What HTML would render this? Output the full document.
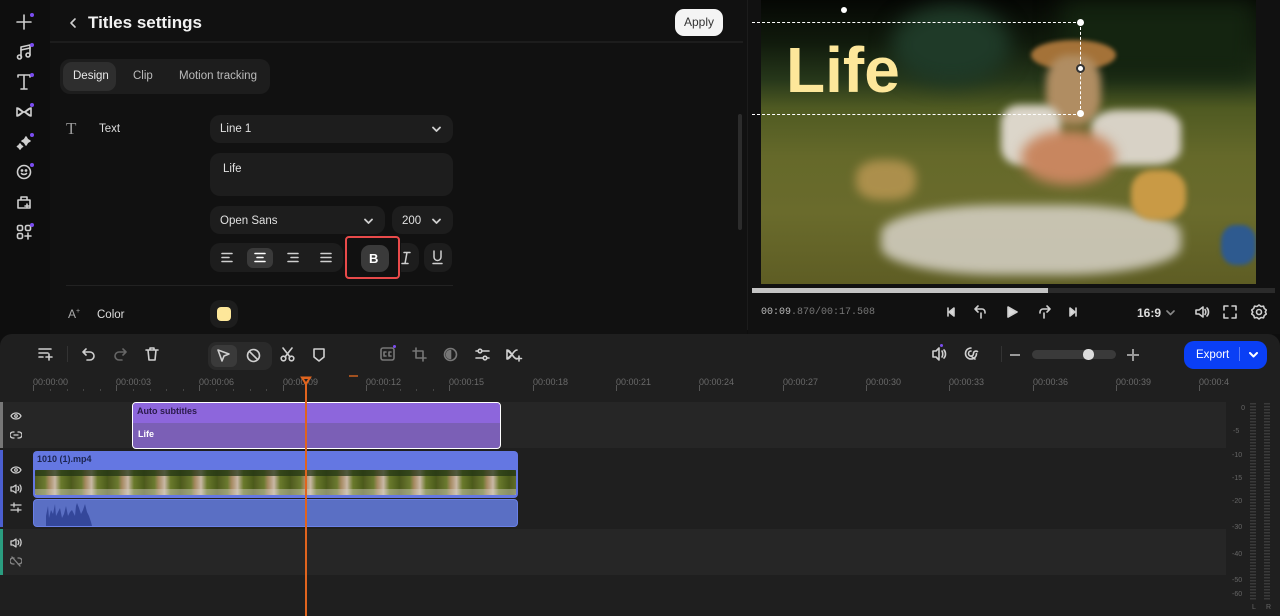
<!DOCTYPE html>
<html><head><meta charset="utf-8"><style>
*{margin:0;padding:0;box-sizing:border-box}
body{width:1280px;height:616px;overflow:hidden;background:#0e0e0e;font-family:"Liberation Sans",sans-serif;color:#ddd;position:relative}
.a{position:absolute}
.ic{position:absolute;stroke:#cfcfcf;fill:none;stroke-width:1.6;stroke-linecap:round;stroke-linejoin:round}
.dot{position:absolute;width:4px;height:4px;border-radius:2px;background:#7b4df0}
.box{position:absolute;background:#1d1d1d;border-radius:10px}
.lbl{position:absolute;font-size:9px;color:#6a6a6a;font-family:"Liberation Sans",sans-serif}
</style></head><body>
<div class="a" style="left:50px;top:0;width:697px;height:334px;background:#111"></div>
<div class="a" style="left:747px;top:0;width:1px;height:330px;background:#1c1c1c"></div>
<div class="a" style="left:748px;top:0;width:532px;height:334px;background:#111"></div>

<svg class="ic" style="left:16px;top:14px" width="16" height="16"><path d="M8 1v14M1 8h14"/></svg><div class="dot" style="left:30px;top:13px"></div>
<svg class="ic" style="left:16px;top:44px" width="16" height="16"><path d="M5 13V3l9-2v10"/><circle cx="3.5" cy="13" r="2"/><circle cx="12" cy="11" r="2"/><path d="M5 6l9-2"/></svg><div class="dot" style="left:30px;top:43px"></div>
<svg class="ic" style="left:16px;top:74px" width="16" height="16"><path d="M2 3V1h12v2M8 1v14M5 15h6"/></svg><div class="dot" style="left:30px;top:73px"></div>
<svg class="ic" style="left:16px;top:104px" width="16" height="16"><path d="M1 4v8l6-4zM15 4v8L9 8zM1 4c3 0 5 4 7 4s4-4 7-4M1 12c3 0 5-4 7-4s4 4 7 4"/></svg><div class="dot" style="left:30px;top:103px"></div>
<svg class="ic" style="left:16px;top:134px" width="16" height="16"><path d="M10 3l1.5 2.5L14 7l-2.5 1.5L10 11 8.5 8.5 6 7l2.5-1.5zM4 10l1 1.5 1.5 1-1.5 1L4 15l-1-1.5L1.5 12.5 3 11.5z" fill="#cfcfcf"/></svg><div class="dot" style="left:30px;top:133px"></div>
<svg class="ic" style="left:16px;top:164px" width="16" height="16"><circle cx="8" cy="8" r="6.5"/><circle cx="6" cy="6.5" r=".6" fill="#cfcfcf"/><circle cx="10" cy="6.5" r=".6" fill="#cfcfcf"/><path d="M5.5 9.5c1 1.3 4 1.3 5 0"/></svg><div class="dot" style="left:30px;top:163px"></div>
<svg class="ic" style="left:16px;top:194px" width="16" height="16"><path d="M2 6h12v8H2zM5 6V3h6v3M11 10v4M9 12h4"/></svg>
<svg class="ic" style="left:16px;top:224px" width="16" height="16"><rect x="1.5" y="1.5" width="5" height="5" rx="1.5"/><rect x="9.5" y="1.5" width="5" height="5" rx="1.5"/><rect x="1.5" y="9.5" width="5" height="5" rx="1.5"/><path d="M12 9v6M9 12h6"/></svg><div class="dot" style="left:30px;top:223px"></div>

<svg class="ic" style="left:69px;top:17px" width="10" height="12"><path d="M6 2L2 6l4 4"/></svg>
<div class="a" style="left:88px;top:13px;font-size:17px;font-weight:bold;color:#f2f2f2">Titles settings</div>
<div class="a" style="left:675px;top:9px;width:48px;height:27px;border-radius:9px;background:#f4f4f4;color:#333;font-size:12px;text-align:center;line-height:27px">Apply</div>
<div class="a" style="left:50px;top:41px;width:693px;height:2px;background:#1d1d1d"></div>

<div class="box" style="left:60px;top:59px;width:210px;height:35px"></div>
<div class="a" style="left:63px;top:62px;width:53px;height:29px;border-radius:9px;background:#2e2e2e"></div>
<div class="a" style="left:73px;top:70px;font-size:11.5px;color:#e8e8e8">Design</div>
<div class="a" style="left:133px;top:70px;font-size:11.5px;color:#bbb">Clip</div>
<div class="a" style="left:179px;top:70px;font-size:11.5px;color:#bbb">Motion tracking</div>

<div class="a" style="left:66px;top:119px;font-family:'Liberation Serif',serif;font-size:17px;color:#999">T</div>
<div class="a" style="left:99px;top:123px;font-size:11.5px;color:#ddd">Text</div>
<div class="box" style="left:210px;top:115px;width:243px;height:28px"></div>
<div class="a" style="left:220px;top:123px;font-size:11.5px;color:#e0e0e0">Line 1</div>
<svg class="ic" style="left:432px;top:126px" width="9" height="7"><path d="M1 1.5l3.5 3.5L8 1.5" stroke-width="1.8"/></svg>
<div class="box" style="left:210px;top:153px;width:243px;height:43px"></div>
<div class="a" style="left:223px;top:163px;font-size:11.5px;color:#e0e0e0">Life</div>
<div class="box" style="left:210px;top:206px;width:175px;height:28px"></div>
<div class="a" style="left:220px;top:215px;font-size:11.5px;color:#e0e0e0">Open Sans</div>
<svg class="ic" style="left:364px;top:218px" width="9" height="7"><path d="M1 1.5l3.5 3.5L8 1.5" stroke-width="1.8"/></svg>
<div class="box" style="left:392px;top:206px;width:61px;height:28px"></div>
<div class="a" style="left:402px;top:215px;font-size:11.5px;color:#e0e0e0">200</div>
<svg class="ic" style="left:432px;top:218px" width="9" height="7"><path d="M1 1.5l3.5 3.5L8 1.5" stroke-width="1.8"/></svg>
<div class="box" style="left:210px;top:243px;width:133px;height:29px"></div>
<div class="a" style="left:247px;top:248px;width:26px;height:20px;border-radius:6px;background:#3a3a3a"></div>
<svg class="ic" style="left:221px;top:252px" width="12" height="11"><path d="M1 1.5h10M1 5.5h7M1 9.5h10"/></svg>
<svg class="ic" style="left:254px;top:252px" width="12" height="11"><path d="M1 1.5h10M3 5.5h6M1 9.5h10" stroke="#fff"/></svg>
<svg class="ic" style="left:287px;top:252px" width="12" height="11"><path d="M1 1.5h10M4 5.5h7M1 9.5h10"/></svg>
<svg class="ic" style="left:320px;top:252px" width="12" height="11"><path d="M1 1.5h10M1 5.5h10M1 9.5h10"/></svg>
<div class="a" style="left:361px;top:245px;width:28px;height:27px;border-radius:9px;background:#3a3a3a"></div>
<div class="a" style="left:369px;top:251px;font-size:13px;font-weight:bold;color:#fff">B</div>
<div class="a" style="left:345px;top:236px;width:55px;height:43px;border:2px solid #e84a4a;border-radius:4px"></div>
<div class="box" style="left:401px;top:243px;width:18px;height:29px;border-radius:0 10px 10px 0"></div>
<svg class="ic" style="left:400px;top:251px" width="12" height="14"><path d="M4 1.5h6M2 12.5h6M7 1.5L5 12.5" stroke-width="1.5"/></svg>
<div class="box" style="left:424px;top:243px;width:28px;height:29px"></div>
<svg class="ic" style="left:431px;top:250px" width="13" height="15"><path d="M3 1v6a3.5 3.5 0 007 0V1M2 13.5h9" stroke-width="1.5"/></svg>
<div class="a" style="left:66px;top:285px;width:387px;height:1px;background:#222"></div>
<div class="a" style="left:68px;top:307px;font-size:12px;color:#aaa">A<sup style="font-size:7px">+</sup></div>
<div class="a" style="left:97px;top:309px;font-size:11.5px;color:#ddd">Color</div>
<div class="box" style="left:210px;top:300px;width:28px;height:28px"></div>
<div class="a" style="left:217px;top:307px;width:14px;height:14px;border-radius:4px;background:#fde79a"></div>
<div class="a" style="left:738px;top:114px;width:4px;height:116px;border-radius:2px;background:#2c2c2c"></div>

<!-- video -->
<div class="a" style="left:761px;top:0;width:495px;height:284px;overflow:hidden;background:linear-gradient(180deg,#050704 0%,#101a0c 15%,#26371a 28%,#4f5a22 38%,#65692a 55%,#6a6b2c 75%,#5e5d24 100%)">
 <div class="a" style="left:130px;top:5px;width:120px;height:80px;border-radius:50%;background:#1f3a28;filter:blur(10px)"></div>
 <div class="a" style="left:300px;top:0;width:195px;height:80px;background:#142410;filter:blur(12px)"></div>
 <div class="a" style="left:270px;top:40px;width:85px;height:30px;border-radius:50%;background:#a47238;filter:blur(2px)"></div>
 <div class="a" style="left:285px;top:55px;width:55px;height:70px;border-radius:40%;background:#b08d62;filter:blur(4px)"></div>
 <div class="a" style="left:240px;top:105px;width:60px;height:60px;border-radius:30%;background:#dcd6ca;filter:blur(4px)"></div>
 <div class="a" style="left:330px;top:110px;width:90px;height:55px;border-radius:30%;background:#d8d2c6;filter:blur(4px)"></div>
 <div class="a" style="left:260px;top:130px;width:95px;height:55px;border-radius:50%;background:#c8865f;filter:blur(6px)"></div>
 <div class="a" style="left:120px;top:205px;width:300px;height:70px;border-radius:40%;background:#d8d3c8;filter:blur(5px);opacity:.85"></div>
 <div class="a" style="left:370px;top:170px;width:55px;height:50px;border-radius:40%;background:#c99a45;filter:blur(3px)"></div>
 <div class="a" style="left:95px;top:160px;width:60px;height:40px;border-radius:40%;background:#caa05a;filter:blur(5px);opacity:.7"></div>
 <div class="a" style="left:460px;top:225px;width:35px;height:40px;border-radius:40%;background:#2e5a8f;filter:blur(2px)"></div>
</div>
<div class="a" style="left:786px;top:33px;font-size:64px;font-weight:bold;color:#fde79a;letter-spacing:0px">Life</div>
<div class="a" style="left:752px;top:22px;width:329px;border-top:1.5px dashed #fff"></div>
<div class="a" style="left:752px;top:114px;width:329px;border-top:1.5px dashed #fff"></div>
<div class="a" style="left:1080px;top:22px;height:92px;border-left:1.5px dashed #fff"></div>
<div class="a" style="left:841px;top:7px;width:6px;height:6px;border-radius:3px;background:#fff"></div>
<div class="a" style="left:1077px;top:19px;width:7px;height:7px;border-radius:4px;background:#fff"></div>
<div class="a" style="left:1076px;top:64px;width:9px;height:9px;border-radius:5px;background:#fff;border:2px solid #333"></div>
<div class="a" style="left:1077px;top:110px;width:7px;height:7px;border-radius:4px;background:#fff"></div>
<div class="a" style="left:752px;top:288px;width:523px;height:5px;background:#2b2b2b"></div>
<div class="a" style="left:752px;top:288px;width:296px;height:5px;background:#c4c4c4"></div>
<div class="a" style="left:761px;top:307px;font-family:'Liberation Mono',monospace;font-size:10px;color:#777"><span style="color:#bbb">00:09</span>.870/00:17.508</div>
<svg class="ic" style="left:946px;top:307px" width="10" height="10"><path d="M2 1v8"/><path d="M8 1L3 5l5 4z" fill="#ddd"/></svg>
<svg class="ic" style="left:973px;top:304px" width="14" height="16"><path d="M5 2L2 5l3 3M2 5h7a3 3 0 013 3v1M8 9v5"/></svg>
<svg class="ic" style="left:1006px;top:306px" width="12" height="12"><path d="M2 1l9 5-9 5z" fill="#ddd"/></svg>
<svg class="ic" style="left:1038px;top:304px" width="14" height="16"><path d="M9 2l3 3-3 3M12 5H5a3 3 0 00-3 3v1M6 9v5"/></svg>
<svg class="ic" style="left:1068px;top:307px" width="10" height="10"><path d="M8 1v8"/><path d="M2 1l5 4-5 4z" fill="#ddd"/></svg>
<div class="a" style="left:1137px;top:306px;font-size:12px;font-weight:bold;color:#ddd">16:9</div>
<svg class="ic" style="left:1166px;top:310px" width="9" height="6"><path d="M1 1l3.5 3.5L8 1" stroke="#888"/></svg>
<svg class="ic" style="left:1195px;top:305px" width="15" height="14"><path d="M1 5h3l4-3v10l-4-3H1zM10 4.5c1 1.5 1 3.5 0 5M12 3c2 2 2 6 0 8"/></svg>
<svg class="ic" style="left:1223px;top:305px" width="14" height="14"><path d="M1 5V1h4M9 1h4v4M13 9v4H9M5 13H1V9"/></svg>
<svg class="ic" style="left:1251px;top:304px" width="16" height="16"><circle cx="8" cy="8" r="2.5"/><path d="M8 1l2 1.5 2.5-.3.8 2.3 2 1.5-1 2 1 2-2 1.5-.8 2.3-2.5-.3L8 15l-2-1.5-2.5.3-.8-2.3-2-1.5 1-2-1-2 2-1.5.8-2.3 2.5.3z"/></svg>

<!-- timeline -->
<div class="a" style="left:0;top:334px;width:1280px;height:282px;background:#1f1f1f;border-radius:12px 12px 0 0"></div>
<svg class="ic" style="left:38px;top:347px" width="16" height="14"><path d="M1 2h12M1 6h9M1 10h4M11 7v6M8 10h6"/></svg>
<div class="a" style="left:67px;top:346px;width:1px;height:16px;background:#333"></div>
<svg class="ic" style="left:82px;top:347px" width="14" height="14"><path d="M4 2L1 5l3 3M1 5h7a4 4 0 010 8H5"/></svg>
<svg class="ic" style="left:113px;top:347px" width="14" height="14"><path d="M10 2l3 3-3 3M13 5H6a4 4 0 000 8h3" stroke="#666"/></svg>
<svg class="ic" style="left:145px;top:346px" width="14" height="16"><path d="M1 4h12M5 4V2h4v2M3 4l1 10h6l1-10"/></svg>
<div class="a" style="left:208px;top:342px;width:64px;height:28px;border-radius:8px;background:#2a2a2a"></div>
<div class="a" style="left:211px;top:345px;width:26px;height:22px;border-radius:6px;background:#3a3a3a"></div>
<svg class="ic" style="left:216px;top:348px" width="15" height="15"><path d="M2 2l11 4-5 2-2 5z"/></svg>
<svg class="ic" style="left:246px;top:348px" width="15" height="15"><circle cx="7.5" cy="7.5" r="6"/><path d="M3.5 3.5l8 8"/></svg>
<svg class="ic" style="left:280px;top:347px" width="15" height="15"><circle cx="3.5" cy="11.5" r="2.3"/><circle cx="11.5" cy="11.5" r="2.3"/><path d="M5 10L12 1M10 10L3 1"/></svg>
<svg class="ic" style="left:312px;top:347px" width="14" height="16"><path d="M2 2h10v8l-5 4-5-4z"/></svg>
<svg class="ic" style="left:380px;top:347px" width="16" height="14"><rect x="1" y="1" width="13" height="12" rx="2" stroke="#777"/><path d="M6 5H4v4h2M11 5H9v4h2" stroke="#777"/></svg><div class="dot" style="left:393px;top:345px;width:3px;height:3px"></div>
<svg class="ic" style="left:412px;top:347px" width="15" height="15"><path d="M4 1v10h10M1 4h10v10" stroke="#777"/></svg>
<svg class="ic" style="left:443px;top:347px" width="15" height="15"><circle cx="7.5" cy="7.5" r="6" stroke="#777"/><path d="M7.5 3.5a4 4 0 000 8z" fill="#777" stroke="#777"/></svg>
<svg class="ic" style="left:475px;top:347px" width="15" height="15"><path d="M1 4h13M1 11h13"/><circle cx="5" cy="4" r="1.8" fill="#1f1f1f"/><circle cx="10" cy="11" r="1.8" fill="#1f1f1f"/></svg>
<svg class="ic" style="left:506px;top:347px" width="17" height="15"><path d="M1 3v9l5-4.5zM1 3c4 0 6 9 10 9M1 12c4 0 6-9 10-9M13 9v5M10.5 11.5h5"/></svg>
<svg class="ic" style="left:932px;top:346px" width="17" height="16"><path d="M1 5h3l3-3v12l-3-3H1zM7 2v12M10 5c1 1.5 1 4.5 0 6M12 4c2 2 2 6 0 8"/></svg><div class="dot" style="left:940px;top:344px;width:3px;height:3px"></div>
<svg class="ic" style="left:964px;top:346px" width="15" height="15"><path d="M7 2a5.5 5.5 0 105.5 5.5M7 5a2.5 2.5 0 102.5 2.5c0-2 2-3 4-2M6 10c2 0 3 2 5 3"/></svg>
<div class="a" style="left:1001px;top:346px;width:1px;height:16px;background:#333"></div>
<div class="a" style="left:1010px;top:354px;width:10px;height:1.5px;background:#999"></div>
<div class="a" style="left:1032px;top:350px;width:84px;height:9px;border-radius:5px;background:#3a3a3a"></div>
<div class="a" style="left:1083px;top:349px;width:11px;height:11px;border-radius:5px;background:#ddd"></div>
<div class="a" style="left:1127px;top:354px;width:12px;height:1.5px;background:#999"></div>
<div class="a" style="left:1132px;top:349px;width:1.5px;height:12px;background:#999"></div>
<div class="a" style="left:1184px;top:341px;width:83px;height:28px;border-radius:10px;background:#0a3ff5"></div>
<div class="a" style="left:1196px;top:348px;font-size:11.5px;line-height:14px;color:#fff">Export</div>
<div class="a" style="left:1239px;top:347px;width:1px;height:14px;background:#5a7df8"></div>
<svg class="ic" style="left:1249px;top:352px" width="9" height="6"><path d="M1 1l3.5 3.5L8 1" stroke="#fff" stroke-width="2"/></svg>

<div class="lbl" style="left:33px;top:377px">00:00:00</div><div class="lbl" style="left:116px;top:377px">00:00:03</div><div class="lbl" style="left:199px;top:377px">00:00:06</div><div class="lbl" style="left:283px;top:377px">00:00:09</div><div class="lbl" style="left:366px;top:377px">00:00:12</div><div class="lbl" style="left:449px;top:377px">00:00:15</div><div class="lbl" style="left:533px;top:377px">00:00:18</div><div class="lbl" style="left:616px;top:377px">00:00:21</div><div class="lbl" style="left:699px;top:377px">00:00:24</div><div class="lbl" style="left:783px;top:377px">00:00:27</div><div class="lbl" style="left:866px;top:377px">00:00:30</div><div class="lbl" style="left:949px;top:377px">00:00:33</div><div class="lbl" style="left:1033px;top:377px">00:00:36</div><div class="lbl" style="left:1116px;top:377px">00:00:39</div><div class="lbl" style="left:1199px;top:377px">00:00:4</div>
<svg class="a" style="left:0;top:385px" width="1230" height="10">
<g stroke="#555"><path d="M33.5 0v6M116.5 0v6M199.5 0v6M283.5 0v6M366.5 0v6M449.5 0v6M533.5 0v6M616.5 0v6M699.5 0v6M783.5 0v6M866.5 0v6M949.5 0v6M1033.5 0v6M1116.5 0v6M1199.5 0v6"/></g>
<g fill="#444"><rect x="50" y="4" width="1" height="2"/><rect x="67" y="4" width="1" height="2"/><rect x="83" y="4" width="1" height="2"/><rect x="100" y="4" width="1" height="2"/><rect x="133" y="4" width="1" height="2"/><rect x="150" y="4" width="1" height="2"/><rect x="166" y="4" width="1" height="2"/><rect x="183" y="4" width="1" height="2"/><rect x="216" y="4" width="1" height="2"/><rect x="233" y="4" width="1" height="2"/><rect x="250" y="4" width="1" height="2"/><rect x="266" y="4" width="1" height="2"/><rect x="383" y="4" width="1" height="2"/><rect x="400" y="4" width="1" height="2"/><rect x="416" y="4" width="1" height="2"/><rect x="433" y="4" width="1" height="2"/></g>
</svg>
<div class="a" style="left:349px;top:375px;width:9px;height:2px;background:#a0501f"></div>

<div class="a" style="left:0;top:402px;width:1226px;height:46px;background:#262626"></div>
<div class="a" style="left:0;top:529px;width:1226px;height:46px;background:#262626"></div>
<div class="a" style="left:0;top:402px;width:3px;height:46px;background:#777"></div>
<div class="a" style="left:0;top:450px;width:3px;height:77px;background:#4b5fd0"></div>
<div class="a" style="left:0;top:529px;width:3px;height:46px;background:#2a9d80"></div>
<svg class="ic" style="left:10px;top:411px" width="12" height="10"><path d="M1 5c2-4 8-4 10 0-2 4-8 4-10 0z" stroke-width="1.3"/><circle cx="6" cy="5" r="1.3" stroke-width="1.2"/></svg>
<svg class="ic" style="left:10px;top:430px" width="12" height="10"><path d="M4 2H3a3 3 0 000 6h1M8 2h1a3 3 0 010 6H8M4 5h4" stroke-width="1.3"/></svg>
<svg class="ic" style="left:10px;top:465px" width="12" height="10"><path d="M1 5c2-4 8-4 10 0-2 4-8 4-10 0z" stroke-width="1.3"/><circle cx="6" cy="5" r="1.3" stroke-width="1.2"/></svg>
<svg class="ic" style="left:10px;top:483px" width="12" height="11"><path d="M1 4h2l3-2v8l-3-2H1zM8 3.5c1 1 1 3 0 4M10 2c1.5 2 1.5 5 0 7" stroke-width="1.3"/></svg>
<svg class="ic" style="left:10px;top:502px" width="12" height="11"><path d="M1 3h10M1 8h10M4 1v4M8 6v4" stroke-width="1.3"/></svg>
<svg class="ic" style="left:10px;top:537px" width="12" height="11"><path d="M1 4h2l3-2v8l-3-2H1zM8 3.5c1 1 1 3 0 4M10 2c1.5 2 1.5 5 0 7" stroke-width="1.3"/></svg>
<svg class="ic" style="left:10px;top:556px" width="12" height="11"><path d="M4 2H3a3 3 0 000 6h1M8 2h1a3 3 0 010 6H8M2 1l8 9" stroke="#888" stroke-width="1.3"/></svg>

<div class="a" style="left:132px;top:402px;width:369px;height:47px;border:1.5px solid #fff;border-radius:4px;overflow:hidden;background:#7b5fb6">
 <div style="height:20px;background:#8d66dc"></div>
</div>
<div class="a" style="left:137px;top:406px;font-size:9px;font-weight:bold;color:#2a1a4a">Auto subtitles</div>
<div class="a" style="left:138px;top:429px;font-size:9px;font-weight:bold;color:#fff">Life</div>
<div class="a" style="left:33px;top:451px;width:485px;height:47px;border-radius:4px;background:#6477e2"></div>
<div class="a" style="left:37px;top:454px;font-size:9px;font-weight:bold;color:#1c2550">1010 (1).mp4</div>
<div class="a" style="left:35px;top:470px;width:481px;height:25px;border-radius:2px;background:repeating-linear-gradient(90deg,#4f5a1e 0,#6b7a30 10px,#a58960 14px,#c9b8a5 20px,#6a7a2c 26px,#4a5a1a 36.5px);"></div>
<div class="a" style="left:35px;top:470px;width:481px;height:6px;background:#1e3012;opacity:.7"></div>
<div class="a" style="left:35px;top:489px;width:481px;height:6px;background:#d7d2c6;opacity:.45"></div>
<div class="a" style="left:33px;top:499px;width:485px;height:28px;border-radius:4px;background:#5a6fc4;border:1.5px solid #6a80e8"></div>
<svg class="a" style="left:46px;top:500px" width="50" height="26"><path d="M0 26V16L2 6 3 18 5 10 7 14 9 4 10 16 12 12 14 8 16 18 18 14 20 6 22 16 24 12 26 10 28 14 29 16 30 6 31 3 33 8 35 14 37 10 39 4 41 12 43 16 45 22 46 26z" fill="#34479a"/></svg>
<div class="a" style="left:305px;top:384px;width:1.5px;height:232px;background:#e0641e"></div>
<svg class="a" style="left:300px;top:376px" width="12" height="10"><path d="M1 1h10L6 9z" fill="#e0641e" stroke="#e0641e"/><path d="M4 3h4L6 6z" fill="#1f1f1f"/></svg>

<div class="a" style="left:1226px;top:400px;width:54px;height:216px;background:#1f1f1f"></div>
<div class="a" style="left:1237px;top:405px;font-size:7px;color:#666;line-height:1;text-align:right;width:8px">0</div>
<div class="a" style="left:1233px;top:428px;font-size:7px;color:#666">-5</div>
<div class="a" style="left:1232px;top:452px;font-size:7px;color:#666">-10</div>
<div class="a" style="left:1232px;top:475px;font-size:7px;color:#666">-15</div>
<div class="a" style="left:1232px;top:498px;font-size:7px;color:#666">-20</div>
<div class="a" style="left:1232px;top:524px;font-size:7px;color:#666">-30</div>
<div class="a" style="left:1232px;top:551px;font-size:7px;color:#666">-40</div>
<div class="a" style="left:1232px;top:577px;font-size:7px;color:#666">-50</div>
<div class="a" style="left:1232px;top:591px;font-size:7px;color:#666">-60</div>
<div class="a" style="left:1250px;top:403px;width:6px;height:197px;background:repeating-linear-gradient(180deg,#3a3a3a 0,#3a3a3a 1.5px,transparent 1.5px,transparent 3px)"></div>
<div class="a" style="left:1264px;top:403px;width:6px;height:197px;background:repeating-linear-gradient(180deg,#3a3a3a 0,#3a3a3a 1.5px,transparent 1.5px,transparent 3px)"></div>
<div class="a" style="left:1252px;top:604px;font-size:7px;color:#666">L</div>
<div class="a" style="left:1266px;top:604px;font-size:7px;color:#666">R</div>
</body></html>
